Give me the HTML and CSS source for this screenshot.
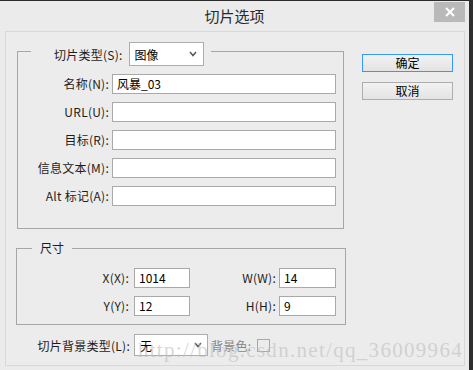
FILE: index.html
```html
<!DOCTYPE html>
<html lang="zh-CN">
<head>
    <meta charset="UTF-8">
    <title>切片选项</title>
    <link rel="stylesheet" href="styles.css">
</head>
<body>
    <div class="window">
        <div class="titlebar">
            <span class="title">切片选项</span>
            <button class="close-btn">
                <svg width="12" height="12" viewBox="0 0 12 12">
                    <path d="M2 2 L10 10 M10 2 L2 10" stroke="#ffffff" stroke-width="2" fill="none"/>
                </svg>
            </button>
        </div>

        <div class="panel">
            <div class="main">
                <div class="left-col">
                    <div class="group group-slice">
                        <div class="group-head head-slice">
                            <span class="label">切片类型(S):</span>
                            <div class="select select-type">
                                <span>图像</span>
                                <svg width="8" height="6" viewBox="0 0 8 6">
                                    <path d="M1 1 L4 4.5 L7 1" stroke="#555" stroke-width="1.5" fill="none"/>
                                </svg>
                            </div>
                        </div>
                        <div class="rows">
                            <div class="row"><span class="row-label">名称(N):</span><div class="input">风暴_03</div></div>
                            <div class="row"><span class="row-label">URL(U):</span><div class="input"></div></div>
                            <div class="row"><span class="row-label">目标(R):</span><div class="input"></div></div>
                            <div class="row"><span class="row-label">信息文本(M):</span><div class="input"></div></div>
                            <div class="row"><span class="row-label">Alt 标记(A):</span><div class="input"></div></div>
                        </div>
                    </div>

                    <div class="group group-size">
                        <div class="group-head head-size">尺寸</div>
                        <div class="size-grid">
                            <span class="size-label">X(X):</span><div class="input small">1014</div>
                            <span class="size-label second">W(W):</span><div class="input small">14</div>
                            <span class="size-label">Y(Y):</span><div class="input small">12</div>
                            <span class="size-label second">H(H):</span><div class="input small">9</div>
                        </div>
                    </div>

                    <div class="bg-row">
                        <span class="bg-label">切片背景类型(L):</span>
                        <div class="select select-bg">
                            <span>无</span>
                            <svg width="8" height="6" viewBox="0 0 8 6">
                                <path d="M1 1 L4 4.5 L7 1" stroke="#555" stroke-width="1.5" fill="none"/>
                            </svg>
                        </div>
                        <span class="disabled-label">背景色:</span>
                        <span class="swatch"></span>
                    </div>
                </div>

                <div class="buttons">
                    <button class="btn btn-default">确定</button>
                    <button class="btn">取消</button>
                </div>
            </div>

            <div class="watermark">http://blog.csdn.net/qq_36009964</div>
        </div>
    </div>
</body>
</html>
```

FILE: styles.css
```css
body {
    margin: 0;
    background: #2e2e2e;
    font-family: "Noto Sans CJK SC", "Noto Sans", sans-serif;
    font-size: 12px;
    color: #1c1c1c;
}

.window {
    width: 469px;
    height: 369px;
    border-top: 1px solid #2b2b2b;
    background: #ebebeb;
}

/* title bar */
.titlebar {
    height: 30px;
    display: grid;
    grid-template-columns: 1fr auto 1fr;
}

.title {
    grid-column: 2;
    line-height: 30px;
    font-size: 15px;
    color: #2a2a2a;
}

.close-btn {
    grid-column: 3;
    justify-self: end;
    align-self: start;
    margin: 1px 4px 0 0;
    width: 31px;
    height: 20px;
    padding: 0;
    border: none;
    background: #b9b9b9;
    display: flex;
    align-items: center;
    justify-content: center;
}

/* content panel */
.panel {
    position: relative;
    box-sizing: border-box;
    width: 460px;
    height: 335px;
    margin-left: 5px;
    border: 1px solid #d8d8d8;
    background: #ececec;
    padding: 19px 0 0 10px;
}

.main {
    display: flex;
}

.left-col {
    width: 330px;
}

.label,
.row-label,
.size-label,
.bg-label,
.disabled-label {
    letter-spacing: 0.25px;
}

.group {
    box-sizing: border-box;
    border: 1px solid #a6a6a6;
}

.group-head {
    background: #ececec;
    width: fit-content;
}

.group-slice {
    width: 327px;
    height: 178px;
    margin-left: 1px;
}

.head-slice {
    display: flex;
    align-items: center;
    gap: 6px;
    height: 24px;
    margin: -10px 0 0 13px;
    padding: 0 7px 0 23px;
}

.select {
    box-sizing: border-box;
    display: flex;
    align-items: center;
    justify-content: space-between;
    background: #ffffff;
    border: 1px solid #adadad;
    color: #000;
}

.select-type {
    width: 75px;
    height: 24px;
    padding: 0 6px 0 5px;
}

.rows {
    display: flex;
    flex-direction: column;
    gap: 8px;
    margin-top: 8px;
}

.row {
    display: flex;
    height: 20px;
}

.row-label {
    width: 91px;
    text-align: right;
    line-height: 20px;
    margin-right: 3px;
    white-space: nowrap;
}

.input {
    box-sizing: border-box;
    width: 224px;
    height: 20px;
    border: 1px solid #a9a9a9;
    background: #ffffff;
    padding-left: 4px;
    line-height: 18px;
    color: #000;
}

/* size group */
.group-size {
    width: 330px;
    height: 77px;
    margin-top: 19px;
}

.head-size {
    height: 16px;
    line-height: 16px;
    margin: -9px 0 0 15px;
    padding: 0 8px;
}

.size-grid {
    display: grid;
    grid-template-columns: 117px 56px 89px 57px;
    grid-auto-rows: 20px;
    row-gap: 8px;
    margin-top: 12px;
}

.size-label {
    text-align: right;
    padding-right: 5px;
    line-height: 20px;
}

.size-label.second {
    padding-right: 3px;
}

.input.small {
    width: auto;
}

/* background row */
.bg-row {
    display: flex;
    align-items: center;
    height: 22px;
    margin-top: 9px;
}

.bg-label {
    width: 114px;
    text-align: right;
    margin-right: 4px;
    white-space: nowrap;
}

.select-bg {
    width: 74px;
    height: 22px;
    padding: 0 5px 0 5px;
}

.disabled-label {
    margin-left: 3px;
    color: #858585;
}

.swatch {
    box-sizing: border-box;
    width: 13px;
    height: 13px;
    margin-left: 6px;
    border: 1px solid #a8a8a8;
}

/* buttons */
.buttons {
    display: flex;
    flex-direction: column;
    gap: 10px;
    margin-left: 16px;
    padding-top: 3px;
}

.btn {
    box-sizing: border-box;
    width: 91px;
    height: 18px;
    padding: 0;
    border: 1px solid #adadad;
    background: linear-gradient(#f2f2f2, #e3e3e3);
    font-family: "Noto Sans CJK SC", sans-serif;
    font-size: 12px;
    line-height: 16px;
    color: #000;
}

.btn-default {
    border-color: #3399ff;
}

.watermark {
    position: absolute;
    right: 1px;
    top: 306px;
    font-family: "Liberation Serif", serif;
    font-size: 21px;
    line-height: 24px;
    letter-spacing: 1.3px;
    color: rgba(190, 190, 190, 0.6);
    white-space: nowrap;
}
```
